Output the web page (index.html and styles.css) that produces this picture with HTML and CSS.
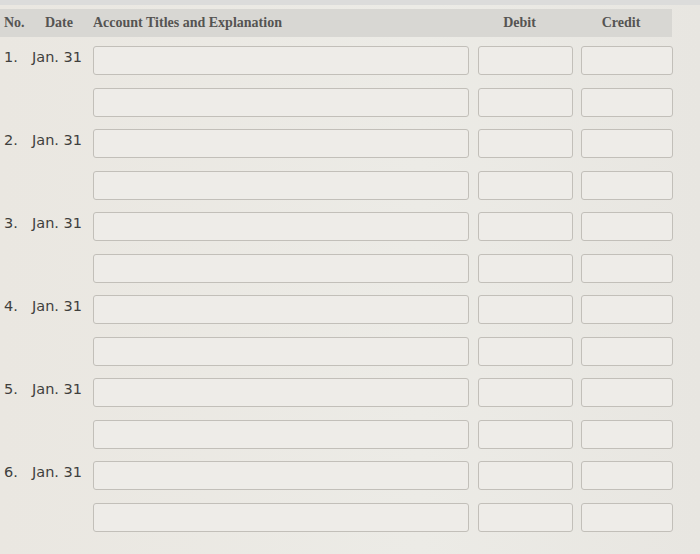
FILE: index.html
```html
<!DOCTYPE html>
<html>
<head>
<meta charset="utf-8">
<link rel="stylesheet" href="styles.css">
</head>
<body>
<div class="topstrip"></div>
<div class="sheet">
  <div class="head">
    <span class="h-no">No.</span>
    <span class="h-date">Date</span>
    <span class="h-acct">Account Titles and Explanation</span>
    <span class="h-debit">Debit</span>
    <span class="h-credit">Credit</span>
  </div>
  <div class="rows">
    <div class="lbl"><span class="num">1.</span><span>Jan. 31</span></div><div class="box acct"></div><div class="box"></div><div class="box"></div>
    <div class="lbl"></div><div class="box acct"></div><div class="box"></div><div class="box"></div>
    <div class="lbl"><span class="num">2.</span><span>Jan. 31</span></div><div class="box acct"></div><div class="box"></div><div class="box"></div>
    <div class="lbl"></div><div class="box acct"></div><div class="box"></div><div class="box"></div>
    <div class="lbl"><span class="num">3.</span><span>Jan. 31</span></div><div class="box acct"></div><div class="box"></div><div class="box"></div>
    <div class="lbl"></div><div class="box acct"></div><div class="box"></div><div class="box"></div>
    <div class="lbl"><span class="num">4.</span><span>Jan. 31</span></div><div class="box acct"></div><div class="box"></div><div class="box"></div>
    <div class="lbl"></div><div class="box acct"></div><div class="box"></div><div class="box"></div>
    <div class="lbl"><span class="num">5.</span><span>Jan. 31</span></div><div class="box acct"></div><div class="box"></div><div class="box"></div>
    <div class="lbl"></div><div class="box acct"></div><div class="box"></div><div class="box"></div>
    <div class="lbl"><span class="num">6.</span><span>Jan. 31</span></div><div class="box acct"></div><div class="box"></div><div class="box"></div>
    <div class="lbl"></div><div class="box acct"></div><div class="box"></div><div class="box"></div>
  </div>
</div>
</body>
</html>
```
FILE: styles.css
```css
html, body {
  margin: 0;
  padding: 0;
}
body {
  width: 700px;
  height: 554px;
  overflow: hidden;
  background: linear-gradient(90deg, #eae7e1 0%, #ecebe6 60%, #e8e6e1 100%);
}
.topstrip {
  height: 5px;
  background: #dcdcdb;
}
.sheet {
  padding-top: 4px;
}
.head {
  width: 672px;
  height: 28px;
  background: #d8d7d3;
  display: flex;
  align-items: center;
  font-family: "Liberation Serif", "Times New Roman", serif;
  font-weight: bold;
  font-size: 14px;
  color: #555452;
}
.h-no { margin-left: 4px; width: 41px; }
.h-date { width: 48px; }
.h-acct { width: 380px; }
.h-debit { width: 95px; text-align: center; margin-left: -1px; }
.h-credit { width: 96px; text-align: center; margin-left: 6px; }
.rows {
  margin-top: 9px;
  display: grid;
  grid-template-columns: 84.5px 376px 95px 92px;
  column-gap: 8.5px;
  grid-auto-rows: 29px;
  row-gap: 12.5px;
}
.lbl {
  display: flex;
  align-items: center;
  padding-left: 4px;
  padding-bottom: 7px;
  font-family: "DejaVu Sans", Verdana, sans-serif;
  font-size: 14.5px;
  color: #3f3f3d;
  white-space: nowrap;
}
.num {
  width: 28px;
}
.box {
  box-sizing: border-box;
  border: 1.5px solid #c2bfb9;
  border-radius: 3px;
  background: #eeece8;
}
```
